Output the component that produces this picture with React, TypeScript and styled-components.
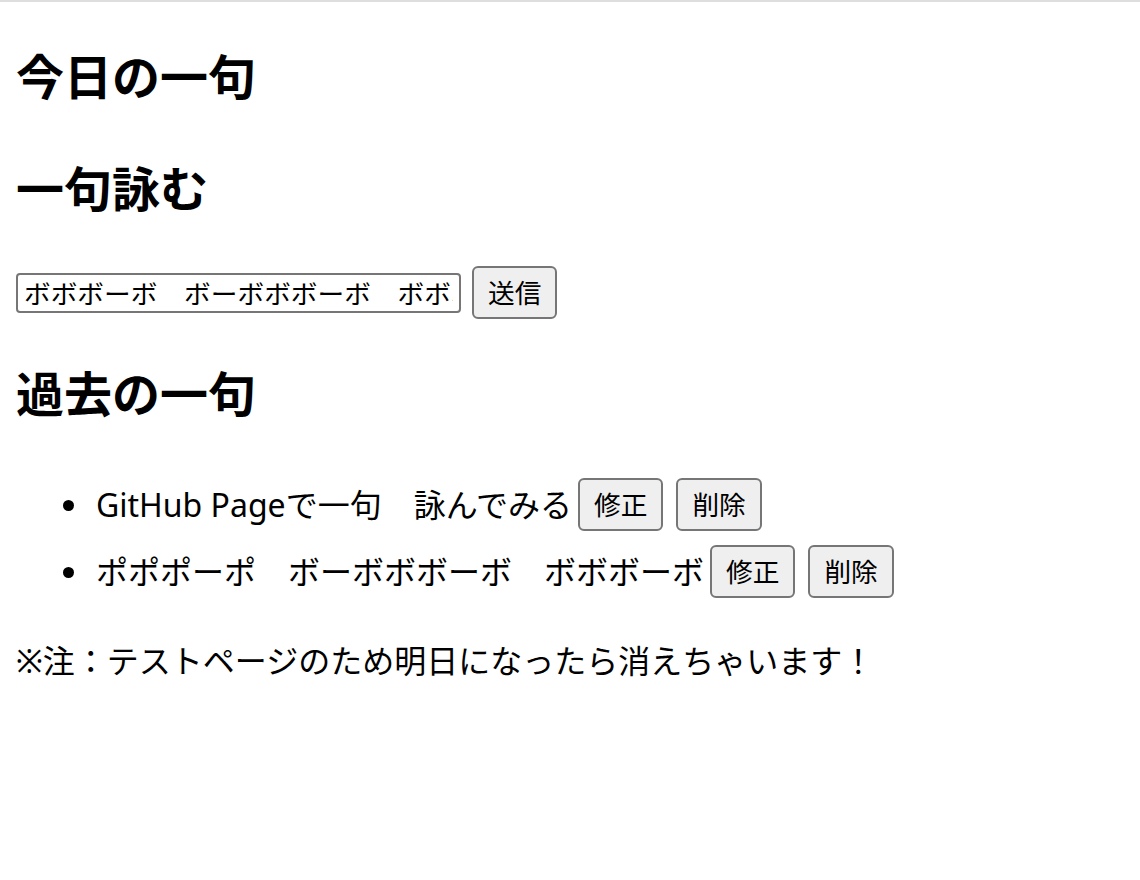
import React, { useState } from "react";
import styled, { createGlobalStyle } from "styled-components";

const GlobalStyle = createGlobalStyle`
	html {
		border-top: 2px solid #dedede;
		background: #ffffff;
	}
	body {
		margin: 0 16px;
		color: #000000;
		font-family: "Noto Sans", "Noto Sans CJK JP", sans-serif;
		font-size: 32px;
		line-height: 1.5;
	}
`;

const Heading = styled.h2`
	font-family: "Noto Sans CJK JP", sans-serif;
	font-size: 48px;
	font-weight: 700;
	line-height: 64px;
	padding-bottom: 8px;
	margin: 40px 0;
`;

const Form = styled.form`
	display: flex;
	align-items: center;
	gap: 11px;
	height: 53px;
`;

const Input = styled.input`
	box-sizing: border-box;
	width: 445px;
	height: 40px;
	padding: 0 6px;
	border: 2px solid #767676;
	border-radius: 4px;
	font-family: "Noto Sans CJK JP", sans-serif;
	font-size: 26.7px;
	color: #000000;
	background: #ffffff;
	outline: none;
`;

const Button = styled.button<{ $gap?: number }>`
	box-sizing: border-box;
	height: 53px;
	padding: 0 14px;
	margin-left: ${(p) => p.$gap ?? 0}px;
	border: 2px solid #767676;
	border-radius: 6px;
	background: #efefef;
	color: #000000;
	font-family: "Noto Sans CJK JP", sans-serif;
	font-size: 26.7px;
	line-height: 1;
	cursor: pointer;
`;

const List = styled.ul`
	margin: 40px 0 32px;
	padding-left: 47px;
	list-style: none;
`;

const Item = styled.li`
	display: flex;
	align-items: center;
	padding: 7px 0;
	line-height: 48px;
`;

const Bullet = styled.span`
	flex: none;
	width: 11px;
	height: 11px;
	margin: 2px 22px 0 0;
	border-radius: 50%;
	background: #000000;
`;

const Note = styled.p`
	margin: 32px 0;
	line-height: 48px;
`;

const pastPoems = [
	"GitHub Pageで一句\u3000詠んでみる",
	"ポポポーポ\u3000ボーボボボーボ\u3000ボボボーボ",
];

const App = () => {
	const [draft, setDraft] = useState("ボボボーボ\u3000ボーボボボーボ\u3000ボボボーボ");

	return (
		<>
			<GlobalStyle />
			<Heading>今日の一句</Heading>
			<Heading>一句詠む</Heading>
			<Form onSubmit={(e) => e.preventDefault()}>
				<Input value={draft} onChange={(e) => setDraft(e.target.value)} />
				<Button type="submit">送信</Button>
			</Form>
			<Heading>過去の一句</Heading>
			<List>
				{pastPoems.map((poem, i) => (
					<Item key={`poem-${i}`}>
						<Bullet />
						<span>{poem}</span>
						<Button $gap={6}>修正</Button>
						<Button $gap={13}>削除</Button>
					</Item>
				))}
			</List>
			<Note>※注：テストページのため明日になったら消えちゃいます！</Note>
		</>
	);
};

export default App;
